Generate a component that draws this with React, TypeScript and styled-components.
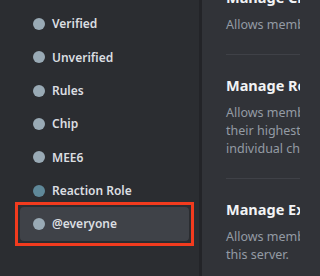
import styled, { createGlobalStyle } from "styled-components";

const roles = [
  { name: "Verified", color: "#99aab5" },
  { name: "Unverified", color: "#99aab5" },
  { name: "Rules", color: "#99aab5" },
  { name: "Chip", color: "#99aab5" },
  { name: "MEE6", color: "#99aab5" },
  { name: "Reaction Role", color: "#5f8899" },
  { name: "@everyone", color: "#99aab5", selected: true },
];

const permissions = [
  {
    title: "Manage Channels",
    lines: ["Allows members to create, edit, or delete channels."],
  },
  {
    title: "Manage Roles",
    lines: [
      "Allows members to create new roles and edit or delete roles lower than",
      "their highest role. Also allows members to change permissions of",
      "individual channels that they have access to.",
    ],
  },
  {
    title: "Manage Expressions",
    lines: [
      "Allows members to add or remove custom emoji, stickers, and sounds in",
      "this server.",
    ],
  },
];

function App() {
  return (
    <>
      <GlobalStyle />
      <Layout>
        <RoleList>
          {roles.map((role) => (
            <RoleItem key={role.name} $selected={role.selected}>
              <RoleDot $color={role.color} />
              <RoleName>{role.name}</RoleName>
              {role.selected && <Highlight />}
            </RoleItem>
          ))}
        </RoleList>
        <Divider />
        <Permissions>
          <Scroller>
            {permissions.map((perm) => (
              <PermSection key={perm.title}>
                <PermTitle>{perm.title}</PermTitle>
                <PermText>
                  {perm.lines.map((line) => (
                    <Line key={line}>{line}</Line>
                  ))}
                </PermText>
              </PermSection>
            ))}
          </Scroller>
        </Permissions>
      </Layout>
    </>
  );
}

const GlobalStyle = createGlobalStyle`
  html, body {
    margin: 0;
    padding: 0;
    background: #313338;
    overflow: hidden;
  }
  body {
    font-family: "Noto Sans", "Liberation Sans", sans-serif;
  }
`;

const Layout = styled.div`
  display: flex;
  width: 300px;
  height: 276px;
  overflow: hidden;
`;

const RoleList = styled.ul`
  list-style: none;
  margin: 0;
  padding: 7.33px 10px 0 20px;
  width: 199px;
  box-sizing: border-box;
  flex-shrink: 0;
  background: #2b2d31;
`;

const RoleItem = styled.li<{ $selected?: boolean }>`
  position: relative;
  display: flex;
  align-items: center;
  height: 33.33px;
  padding-left: 13px;
  border-radius: 4px;
  background: ${(p) => (p.$selected ? "#3f4248" : "transparent")};
`;

const RoleDot = styled.span<{ $color: string }>`
  width: 12px;
  height: 12px;
  border-radius: 50%;
  background: ${(p) => p.$color};
  flex-shrink: 0;
`;

const RoleName = styled.span`
  margin-left: 7px;
  font-size: 12px;
  font-weight: 600;
  color: #dbdee1;
  white-space: nowrap;
`;

const Highlight = styled.span`
  position: absolute;
  inset: -5.33px -5px -5.33px -5px;
  border: 3px solid #f23b1e;
  pointer-events: none;
`;

const Divider = styled.div`
  width: 3px;
  flex-shrink: 0;
  background: #232428;
`;

const Permissions = styled.div`
  flex: 1;
  min-width: 0;
  overflow: hidden;
  padding-left: 24px;
`;

const Scroller = styled.div`
  margin-top: -33px;
`;

const PermSection = styled.section`
  padding: 20px 0;
  border-bottom: 1px solid #3f4147;
`;

const PermTitle = styled.h3`
  margin: 0 0 9px;
  font-size: 14.5px;
  line-height: 20px;
  font-weight: 700;
  color: #f2f3f5;
  white-space: nowrap;
`;

const PermText = styled.div`
  font-size: 12.5px;
  line-height: 18px;
  color: #949ba4;
`;

const Line = styled.div`
  white-space: nowrap;
`;

export default App;
